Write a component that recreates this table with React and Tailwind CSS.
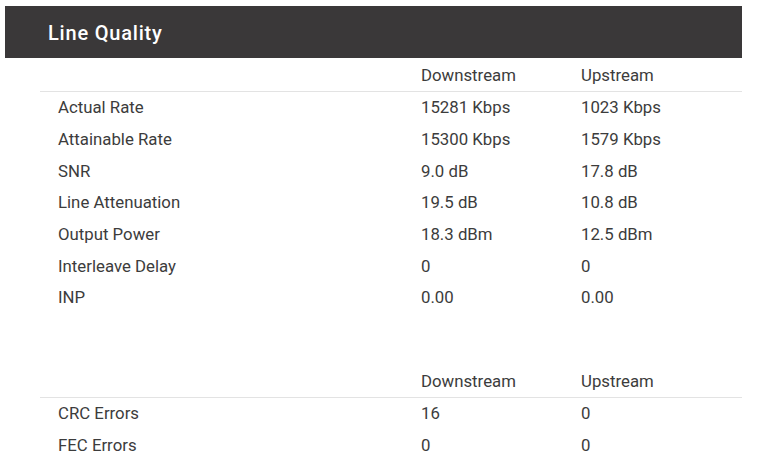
import React from "react";

const rows1 = [
  ["Actual Rate", "15281 Kbps", "1023 Kbps"],
  ["Attainable Rate", "15300 Kbps", "1579 Kbps"],
  ["SNR", "9.0 dB", "17.8 dB"],
  ["Line Attenuation", "19.5 dB", "10.8 dB"],
  ["Output Power", "18.3 dBm", "12.5 dBm"],
  ["Interleave Delay", "0", "0"],
  ["INP", "0.00", "0.00"],
];
const rows2 = [
  ["CRC Errors", "16", "0"],
  ["FEC Errors", "0", "0"],
];

function Table({ rows, className = "" }) {
  return (
    <div className={"ml-[35px] w-[702px] " + className}>
      <div className="grid grid-cols-[381px_160px_1fr] h-[33px] pt-[1px] items-center border-b border-[#e3e3e3]">
        <div></div>
        <div>Downstream</div>
        <div>Upstream</div>
      </div>
      {rows.map((r) => (
        <div key={r[0]} className="grid grid-cols-[381px_160px_1fr] h-[31.7px] items-center">
          <div className="pl-[18px]">{r[0]}</div>
          <div>{r[1]}</div>
          <div>{r[2]}</div>
        </div>
      ))}
    </div>
  );
}

export default function App() {
  return (
    <div className="w-[764px] h-[474px] bg-white pl-[5px] pt-[6px] text-[16.8px] text-[#3c3c3c] overflow-hidden" style={{ fontFamily: "Roboto, sans-serif" }}>
      <div className="w-[737px] h-[52px] bg-[#3a3839] flex items-center pl-[43px] pt-[2px]">
        <span className="text-white text-[20px] font-medium tracking-[0.8px]">Line Quality</span>
      </div>
      <Table rows={rows1} className="mt-[1px]" />
      <div className="h-[51px]"></div>
      <Table rows={rows2} />
    </div>
  );
}
